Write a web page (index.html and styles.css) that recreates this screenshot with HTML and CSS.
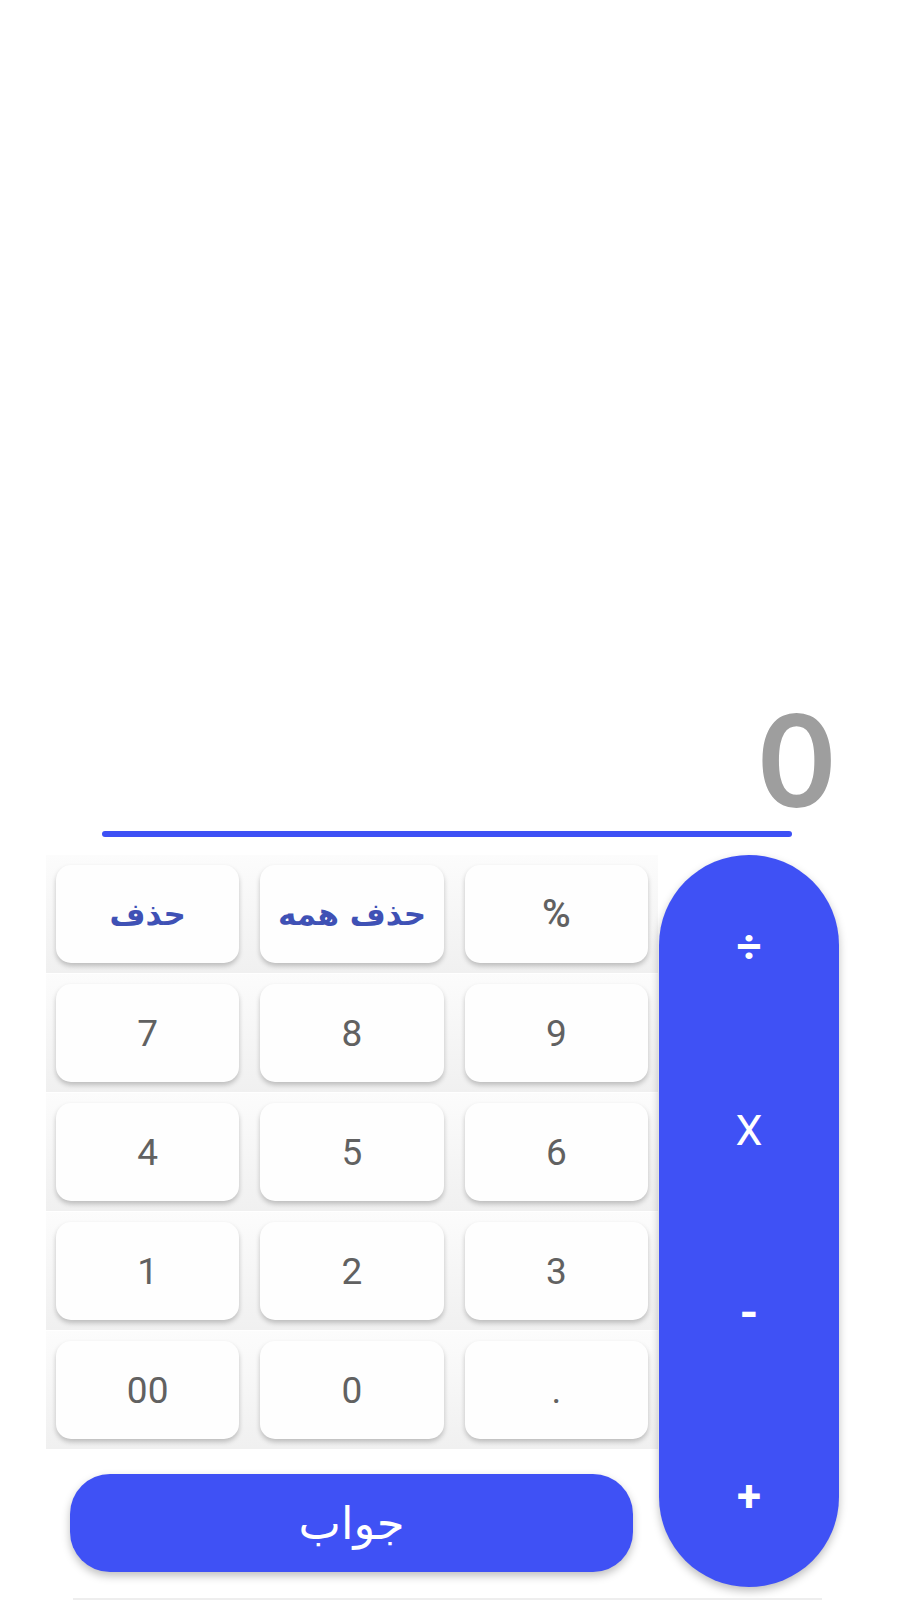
FILE: index.html
```html
<!DOCTYPE html>
<html lang="fa">
<head>
<meta charset="utf-8">
<title>Calculator</title>
<link rel="stylesheet" href="styles.css">
</head>
<body>
<div class="app">
  <div class="display">0</div>
  <div class="underline"></div>
  <div class="keypad">
    <div class="left">
      <div class="row">
        <div class="key fa">حذف</div>
        <div class="key fa">حذف همه</div>
        <div class="key pct">%</div>
      </div>
      <div class="row">
        <div class="key">7</div>
        <div class="key">8</div>
        <div class="key">9</div>
      </div>
      <div class="row">
        <div class="key">4</div>
        <div class="key">5</div>
        <div class="key">6</div>
      </div>
      <div class="row">
        <div class="key">1</div>
        <div class="key">2</div>
        <div class="key">3</div>
      </div>
      <div class="row">
        <div class="key">00</div>
        <div class="key">0</div>
        <div class="key">.</div>
      </div>
      <div class="answer">جواب</div>
    </div>
    <div class="ops">
      <div class="op">÷</div>
      <div class="op op-x">X</div>
      <div class="op op-minus">-</div>
      <div class="op">+</div>
    </div>
  </div>
  <div class="bottom-line"></div>
</div>
</body>
</html>
```
FILE: styles.css
```css
html, body {
  margin: 0;
  padding: 0;
  background: #ffffff;
}
body {
  font-family: Roboto, "DejaVu Sans", sans-serif;
}
.app {
  width: 900px;
  height: 1600px;
  overflow: hidden;
  display: flex;
  flex-direction: column;
}
.display {
  margin-top: 692px;
  height: 132px;
  font-family: Lato, "DejaVu Sans", sans-serif;
  font-weight: bold;
  font-size: 129px;
  line-height: 130px;
  color: #9e9e9e;
  text-align: right;
  padding-right: 66px;
}
.underline {
  margin-top: 7px;
  margin-left: 102px;
  width: 690px;
  height: 6px;
  border-radius: 3px;
  background: #3d50f5;
}
.keypad {
  margin-top: 18px;
  margin-left: 46px;
  display: flex;
  gap: 1px;
  height: 732px;
}
.left {
  width: 612px;
  display: flex;
  flex-direction: column;
  gap: 1px;
}
.row {
  height: 118px;
  box-sizing: border-box;
  padding: 10px 10px;
  display: grid;
  grid-template-columns: repeat(3, 1fr);
  column-gap: 21px;
  background: linear-gradient(to bottom, #fcfcfc, #f0f0f0);
}
.key {
  height: 98px;
  background: #fefefe;
  border-radius: 15px;
  box-shadow: 0 3px 5px rgba(0, 0, 0, 0.22);
  display: flex;
  align-items: center;
  justify-content: center;
  font-size: 37px;
  color: #616161;
}
.key.pct {
  font-weight: 500;
  font-size: 39px;
}
.key.fa {
  font-family: "DejaVu Sans", sans-serif;
  font-weight: bold;
  font-size: 31px;
  color: #3f51b5;
  direction: rtl;
}
.answer {
  margin-top: 24px;
  margin-left: 24px;
  width: 563px;
  height: 98px;
  border-radius: 40px;
  background: #3f51f5;
  box-shadow: 0 4px 8px rgba(0, 0, 0, 0.25);
  color: #ffffff;
  font-family: "DejaVu Sans", sans-serif;
  font-size: 45px;
  display: flex;
  align-items: center;
  justify-content: center;
  direction: rtl;
}
.ops {
  width: 180px;
  height: 732px;
  border-radius: 90px;
  background: #3f51f5;
  box-shadow: 0 4px 8px rgba(0, 0, 0, 0.25);
  display: flex;
  flex-direction: column;
}
.op {
  flex: 1;
  display: flex;
  align-items: center;
  justify-content: center;
  color: #ffffff;
  font-size: 44px;
  font-weight: bold;
}
.op-x {
  font-weight: normal;
  font-size: 43px;
}
.op-minus {
  font-size: 48px;
}
.bottom-line {
  margin-top: 11px;
  margin-left: 73px;
  width: 749px;
  height: 2px;
  background: #eeeeee;
}
```
